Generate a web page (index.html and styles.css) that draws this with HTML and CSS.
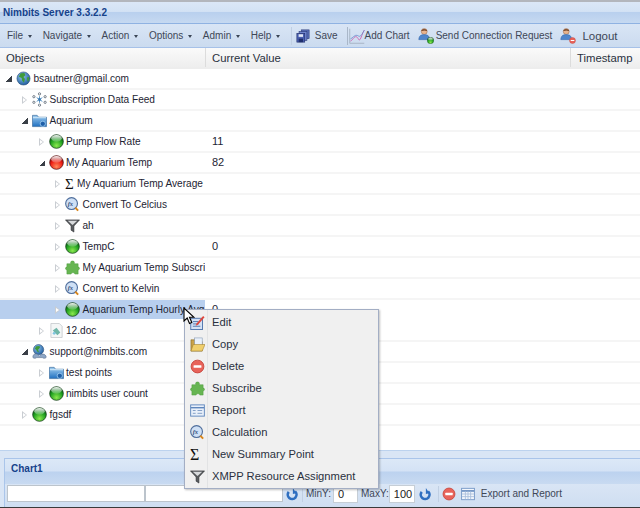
FILE: index.html
```html
<!DOCTYPE html>
<html lang="en">
<head>
<meta charset="utf-8">
<title>Nimbits Server</title>
<link rel="stylesheet" href="styles.css">
</head>
<body>
<svg class="defs" width="0" height="0" aria-hidden="true">
  <defs>
    <radialGradient id="gGreen" cx="50%" cy="80%" r="70%"><stop offset="0" stop-color="#8be84f"/><stop offset=".65" stop-color="#1fa01f"/><stop offset="1" stop-color="#0b5f14"/></radialGradient>
    <radialGradient id="gRed" cx="50%" cy="80%" r="70%"><stop offset="0" stop-color="#ff8a5c"/><stop offset=".65" stop-color="#ee1c12"/><stop offset="1" stop-color="#8f0b0b"/></radialGradient>
    <linearGradient id="gShine" x1="0" y1="0" x2="0" y2="1"><stop offset="0" stop-color="#fff" stop-opacity=".95"/><stop offset="1" stop-color="#fff" stop-opacity=".15"/></linearGradient>
    <radialGradient id="gEarth" cx="40%" cy="35%" r="70%"><stop offset="0" stop-color="#8fc4ee"/><stop offset="1" stop-color="#1d5a9c"/></radialGradient>
    <linearGradient id="gFolder" x1="0" y1="0" x2="0" y2="1"><stop offset="0" stop-color="#9fcdf0"/><stop offset="1" stop-color="#1f6fc0"/></linearGradient>
    <symbol id="i-green" viewBox="0 0 16 16"><circle cx="8" cy="8" r="7.3" fill="url(#gGreen)" stroke="#17401a" stroke-width=".8"/><ellipse cx="8" cy="4.600" rx="5.600" ry="3.600" fill="url(#gShine)"/></symbol>
    <symbol id="i-red" viewBox="0 0 16 16"><circle cx="8" cy="8" r="7.3" fill="url(#gRed)" stroke="#5a1212" stroke-width=".8"/><ellipse cx="8" cy="4.600" rx="5.600" ry="3.600" fill="url(#gShine)"/></symbol>
    <symbol id="i-globe" viewBox="0 0 16 16"><circle cx="8" cy="8" r="7" fill="url(#gEarth)" stroke="#2c4f78" stroke-width=".6"/><path d="M5 2.500 9 2l1 2.500-2 2 1.500 2-1 4-2-2.500-.5-2.500L3 6z" fill="#3f9a3a"/><path d="M11.500 7l2.500-.5v3l-1.500 2z" fill="#3f9a3a"/></symbol>
    <symbol id="i-user-globe" viewBox="0 0 16 16"><circle cx="7" cy="6" r="5.500" fill="url(#gEarth)" stroke="#2c4f78" stroke-width=".6"/><path d="M4.500 2.500 8 2l.5 2-2 2 1 3-2-1-1-2L3 5z" fill="#3f9a3a"/><path d="M1 13c1-3 3-3 5-2l2 2 2-2c2-.6 4 0 5 2v1.500c-1 1-3 1-4 0H5c-1 1-3 1-4 0z" fill="#8ea7c6" stroke="#50688a" stroke-width=".6"/></symbol>
    <symbol id="i-feed" viewBox="0 0 16 16"><g fill="none" stroke="#6a7480" stroke-width="1"><circle cx="8" cy="2" r="1.200"/><circle cx="8" cy="14" r="1.200"/><circle cx="2" cy="5" r="1.200"/><circle cx="14" cy="5" r="1.200"/><circle cx="2" cy="11" r="1.200"/><circle cx="14" cy="11" r="1.200"/></g><g stroke="#4f8fc4" stroke-width="1"><path d="M8 4.500v7M5 6l6 4M11 6l-6 4"/></g><circle cx="8" cy="8" r="1.500" fill="#3b79b0"/></symbol>
    <symbol id="i-folder" viewBox="0 0 16 16"><path d="M.5 2.500h5l1.500 2h8.500v10H.5z" fill="url(#gFolder)" stroke="#3a6a9a" stroke-width=".7"/><path d="M1 5h14" stroke="#d6ecfb" stroke-width="1"/><circle cx="11.500" cy="11.500" r="2.800" fill="#1f5fa8" stroke="#a9d4f4" stroke-width=".8"/></symbol>
    <symbol id="i-fx" viewBox="0 0 16 16"><circle cx="7" cy="7" r="6.300" fill="#cfe0f5" stroke="#4f6e9c" stroke-width="1.200"/><path d="M11 11.500l3 3" stroke="#d9861c" stroke-width="2"/><text x="2.800" y="10" class="fx-glyph">fx</text></symbol>
    <symbol id="i-filter" viewBox="0 0 16 16"><path d="M.5 2h15L9.500 8.500V15l-3-2V8.500z" fill="#5a5d60" stroke="#26282a" stroke-width=".6"/><path d="M3 3h10L8 7.500z" fill="#d9dbdd"/></symbol>
    <symbol id="i-puzzle" viewBox="0 0 16 16"><path d="M6 2.500c0-2 4-2 4 0V4h4v3.500c2 0 2 3 0 3V15h-3.500c0-2-4-2-4 0H2v-4.500c-2 0-2-3 0-3V4h4z" fill="#66b552" stroke="#4a9a3c" stroke-width=".5"/></symbol>
    <symbol id="i-doc" viewBox="0 0 16 16"><path d="M2 .5h9l3 3v12H2z" fill="#f4f6f6" stroke="#b8bec2" stroke-width=".7"/><path d="M4 8l4-3 4 5-3 3z" fill="#6fb6a8"/><circle cx="5.500" cy="11" r="1.500" fill="#7fc4e0"/></symbol>
    <symbol id="i-delete" viewBox="0 0 16 16"><circle cx="8" cy="8" r="6.800" fill="#e8635a" stroke="#c9483f" stroke-width="1"/><rect x="3.800" y="6.600" width="8.400" height="2.800" rx=".6" fill="#fff"/></symbol>
    <symbol id="i-refresh" viewBox="0 0 16 16"><path d="M4.300 5.500A5 5 0 1 0 11.500 5" fill="none" stroke="#2f6fc0" stroke-width="3"/><path d="M9 1v7l4-1z" fill="#2f6fc0"/></symbol>
    <symbol id="i-save" viewBox="0 0 16 16"><rect x="6" y="1" width="9" height="10" fill="#5a6fb8" stroke="#2b3a78" stroke-width=".7"/><rect x="3.500" y="3" width="9" height="10" fill="#6f84cc" stroke="#2b3a78" stroke-width=".7"/><rect x="1" y="5" width="9" height="10" fill="#4a5fb0" stroke="#1f2c68" stroke-width=".7"/><rect x="3" y="6" width="5" height="3" fill="#dfe6f5"/><rect x="3" y="11" width="5" height="4" fill="#20306e"/></symbol>
    <symbol id="i-chart" viewBox="0 0 22 22"><path d="M1 1v20h20" fill="none" stroke="#9aa8b8" stroke-width="1"/><path d="M2 18c3-1 5-7 8-6s3 6 5 4 3-9 6-13" fill="none" stroke="#cc5fae" stroke-width="1.200"/><path d="M2 15c3-1 6-6 9-5s4 5 10-7" fill="none" stroke="#5f86c8" stroke-width="1"/></symbol>
    <symbol id="i-user" viewBox="0 0 18 18"><circle cx="8" cy="4.500" r="3.800" fill="#e7b48e" stroke="#7a4a2a" stroke-width=".5"/><path d="M4.300 4c0-3 7.400-3 7.400 0-2-1-5-1-7.400 0z" fill="#6a3a1c"/><path d="M1 15c0-5 3-6.500 7-6.500s7 1.500 7 6.500z" fill="#4f86cc" stroke="#2a5a9c" stroke-width=".5"/></symbol>
    <symbol id="i-edit" viewBox="0 0 16 16"><rect x=".8" y="3.500" width="12.500" height="12" fill="#d4e2f6" stroke="#4f74ac" stroke-width="1"/><path d="M3 7h6M3 9.500h6M3 12h8" stroke="#4f74ac" stroke-width="1"/><path d="M7 9l7-8 1.500 1.500-7 8-2.500 1z" fill="#e0463c"/></symbol>
    <symbol id="i-open" viewBox="0 0 16 16"><path d="M1 3h5l1 2h6v10H1z" fill="#c9a24a" stroke="#7f6420" stroke-width=".6"/><rect x="5" y="1" width="8" height="8" fill="#eaf1fa" stroke="#7f93b0" stroke-width=".6"/><path d="M1 15l2.500-7H16l-3 7z" fill="#f0cf6c" stroke="#a07f2a" stroke-width=".6"/></symbol>
    <symbol id="i-report" viewBox="0 0 16 16"><rect x=".7" y="2" width="14.600" height="12" fill="#e9f0fa" stroke="#5f86bc" stroke-width="1"/><path d="M1 5h14" stroke="#5f86bc" stroke-width="1.500"/><path d="M3 8h3M3 11h3M8 8h5M8 11h5" stroke="#7f9cc4" stroke-width="1"/></symbol>
    <symbol id="i-table" viewBox="0 0 16 16"><rect x=".7" y="1.500" width="14.600" height="13" fill="#f2f6fc" stroke="#6f93c4" stroke-width="1"/><path d="M1 4.500h14" stroke="#6f93c4" stroke-width="2"/><path d="M1 8h14M1 11h14M5 5v9M8 5v9M11 5v9" stroke="#a9bfdc" stroke-width="1"/></symbol>
  </defs>
</svg>

<div class="app">
  <header class="titlebar"><span class="title">Nimbits Server 3.3.2.2</span></header>

  <nav class="toolbar">
    <span class="tb-item menu-btn">File</span>
    <span class="tb-item menu-btn">Navigate</span>
    <span class="tb-item menu-btn">Action</span>
    <span class="tb-item menu-btn">Options</span>
    <span class="tb-item menu-btn">Admin</span>
    <span class="tb-item menu-btn">Help</span>
    <span class="tb-sep"></span>
    <span class="tb-item tb-save"><svg class="ic14"><use href="#i-save"/></svg><span class="tb-label">Save</span></span>
    <span class="tb-sep tb-sep-chart"></span>
    <span class="tb-item tb-chart"><svg class="ic16"><use href="#i-chart"/></svg><span>Add Chart</span></span>
    <span class="tb-item tb-conn"><span class="usr"><svg class="ic14"><use href="#i-user"/></svg><svg class="badge"><use href="#i-green"/></svg></span><span class="tb-label">Send Connection Request</span></span>
    <span class="tb-item tb-logout"><span class="usr"><svg class="ic14"><use href="#i-user"/></svg><svg class="badge"><use href="#i-delete"/></svg></span><span class="tb-logout-label">Logout</span></span>
  </nav>

  <div class="grid-head">
    <div class="col col-name">Objects</div>
    <div class="col col-val">Current Value</div>
    <div class="col col-ts">Timestamp</div>
  </div>

  <main class="tree">
    <div class="row l0"><span class="cell-name"><i class="arrow open"></i><svg class="ic"><use href="#i-globe"/></svg><span>bsautner@gmail.com</span></span></div>
    <div class="row l1"><span class="cell-name"><i class="arrow"></i><svg class="ic"><use href="#i-feed"/></svg><span>Subscription Data Feed</span></span></div>
    <div class="row l1"><span class="cell-name"><i class="arrow open"></i><svg class="ic"><use href="#i-folder"/></svg><span>Aquarium</span></span></div>
    <div class="row l2"><span class="cell-name"><i class="arrow"></i><svg class="ic"><use href="#i-green"/></svg><span>Pump Flow Rate</span></span><span class="cell-val">11</span></div>
    <div class="row l2"><span class="cell-name"><i class="arrow open"></i><svg class="ic"><use href="#i-red"/></svg><span>My Aquarium Temp</span></span><span class="cell-val">82</span></div>
    <div class="row l3"><span class="cell-name"><i class="arrow"></i><span class="sigma">Σ</span><span>My Aquarium Temp Average</span></span></div>
    <div class="row l3"><span class="cell-name"><i class="arrow"></i><svg class="ic"><use href="#i-fx"/></svg><span>Convert To Celcius</span></span></div>
    <div class="row l3"><span class="cell-name"><i class="arrow"></i><svg class="ic"><use href="#i-filter"/></svg><span>ah</span></span></div>
    <div class="row l3"><span class="cell-name"><i class="arrow"></i><svg class="ic"><use href="#i-green"/></svg><span>TempC</span></span><span class="cell-val">0</span></div>
    <div class="row l3"><span class="cell-name"><i class="arrow"></i><svg class="ic"><use href="#i-puzzle"/></svg><span>My Aquarium Temp Subscription</span></span></div>
    <div class="row l3"><span class="cell-name"><i class="arrow"></i><svg class="ic"><use href="#i-fx"/></svg><span>Convert to Kelvin</span></span></div>
    <div class="row l3 selected"><span class="cell-name"><i class="arrow"></i><svg class="ic"><use href="#i-green"/></svg><span>Aquarium Temp Hourly Avg</span></span><span class="cell-val">0</span></div>
    <div class="row l2"><span class="cell-name"><i class="arrow"></i><svg class="ic"><use href="#i-doc"/></svg><span>12.doc</span></span></div>
    <div class="row l1"><span class="cell-name"><i class="arrow open"></i><svg class="ic"><use href="#i-user-globe"/></svg><span>support@nimbits.com</span></span></div>
    <div class="row l2"><span class="cell-name"><i class="arrow"></i><svg class="ic"><use href="#i-folder"/></svg><span>test points</span></span></div>
    <div class="row l2"><span class="cell-name"><i class="arrow"></i><svg class="ic"><use href="#i-green"/></svg><span>nimbits user count</span></span></div>
    <div class="row l1"><span class="cell-name"><i class="arrow"></i><svg class="ic"><use href="#i-green"/></svg><span>fgsdf</span></span></div>
  </main>

  <section class="chart">
    <div class="chart-inner">
      <div class="chart-head">Chart1</div>
      <div class="chart-tools">
        <span class="field f1"></span>
        <span class="field f2"></span>
        <svg class="ic14 tool-refresh"><use href="#i-refresh"/></svg>
        <span class="tb-sep"></span>
        <span class="lbl">MinY:</span><span class="num n0">0</span>
        <span class="lbl lbl-max">MaxY:</span><span class="num n1">100</span>
        <svg class="ic14 tool-refresh2"><use href="#i-refresh"/></svg>
        <span class="tb-sep"></span>
        <svg class="ic14"><use href="#i-delete"/></svg>
        <svg class="ic14"><use href="#i-table"/></svg>
        <span class="export">Export and Report</span>
      </div>
    </div>
  </section>
  <div class="footer-line"></div>
</div>

<div class="ctx">
  <div class="ctx-item"><svg class="ctx-ic"><use href="#i-edit"/></svg><span>Edit</span></div>
  <div class="ctx-item"><svg class="ctx-ic"><use href="#i-open"/></svg><span>Copy</span></div>
  <div class="ctx-item"><svg class="ctx-ic"><use href="#i-delete"/></svg><span>Delete</span></div>
  <div class="ctx-item"><svg class="ctx-ic"><use href="#i-puzzle"/></svg><span>Subscribe</span></div>
  <div class="ctx-item"><svg class="ctx-ic"><use href="#i-report"/></svg><span>Report</span></div>
  <div class="ctx-item"><svg class="ctx-ic"><use href="#i-fx"/></svg><span>Calculation</span></div>
  <div class="ctx-item"><span class="ctx-ic ctx-sigma">Σ</span><span>New Summary Point</span></div>
  <div class="ctx-item"><svg class="ctx-ic"><use href="#i-filter"/></svg><span>XMPP Resource Assignment</span></div>
</div>

<svg class="cursor" viewBox="0 0 12 18"><path d="M1 1v13l3.200-3 2.300 5.500 2.300-1-2.300-5.200H11z" fill="#fff" stroke="#000" stroke-width="1.100"/></svg>
</body>
</html>
```

FILE: styles.css
```css
* { box-sizing: border-box; }
html, body { margin: 0; height: 100%; }
body {
  width: 640px;
  height: 508px;
  overflow: hidden;
  background: #fff;
  font-family: "Liberation Sans", Arial, sans-serif;
  font-size: 11px;
  color: #1d2433;
  position: relative;
}
.defs { position: absolute; }
.fx-glyph { font: italic bold 7px "Liberation Serif", serif; fill: #33507c; }

.app { display: flex; flex-direction: column; height: 508px; }

.titlebar {
  height: 24px;
  flex: none;
  border-top: 2px solid #b3b6bc;
  border-bottom: 1px solid #8fb2e2;
  background: linear-gradient(#dbe7f6 0, #d3e2f4 45%, #b9d0ee 50%, #c6d9f1 100%);
  padding: 2px 0 0 3px;
}
.title { font-weight: bold; font-size: 10px; color: #15428b; line-height: 17px; }

.toolbar {
  height: 24px;
  flex: none;
  display: flex;
  align-items: center;
  padding-left: 7px;
  background: linear-gradient(#d9e5f5, #cbdbef);
  border-bottom: 1px solid #a6c1e8;
  color: #3e4757;
  font-size: 10px;
}
.tb-item { display: inline-flex; align-items: center; white-space: nowrap; }
.menu-btn { margin-right: 10.500px; }
.menu-btn::after {
  content: "";
  margin-left: 5px;
  margin-top: 1px;
  border-left: 2.500px solid transparent;
  border-right: 2.500px solid transparent;
  border-top: 3px solid #3a4556;
}
.tb-sep { width: 1px; height: 18px; border-left: 1px solid #c0cfe3; flex: none; }
.tb-save { margin-left: 4px; }
.tb-label { margin-left: 5px; }
.tb-sep-chart { margin-left: 9px; border-left-color: #a9b7c9; }
.tb-chart { margin-left: 1px; }
.tb-conn { margin-left: 8px; }
.tb-conn .tb-label { margin-left: 3px; }
.tb-logout { margin-left: 8px; }
.tb-logout-label { margin-left: 7px; font-size: 11.500px; }
.usr { position: relative; display: inline-flex; width: 15px; height: 16px; }
.badge { position: absolute; right: -1px; bottom: 0; width: 7px; height: 7px; }
.ic14 { width: 14px; height: 14px; flex: none; }
.ic16 { width: 16px; height: 16px; flex: none; }

.grid-head {
  height: 21px;
  flex: none;
  display: flex;
  background: linear-gradient(#fafafa, #eeeeee);
  border-bottom: 2px solid #ededed;
  font-size: 11.300px;
  color: #2a3140;
  line-height: 20px;
}
.col { padding-left: 6px; border-right: 1px solid #dcdcdc; }
.col-name { width: 206px; }
.col-val { width: 365px; }
.col-ts { flex: 1; border-right: 0; }

.tree { flex: none; height: 357px; display: flex; flex-direction: column; }
.row {
  height: 21px;
  flex: none;
  display: flex;
  align-items: center;
  border-bottom: 2px solid #f5f5f5;
  white-space: nowrap;
}
.cell-name {
  width: 205px;
  height: 100%;
  flex: none;
  overflow: hidden;
  display: flex;
  align-items: center;
  font-size: 10.100px;
}
.cell-name > span:last-child { margin-top: -1px; }
.l0 .cell-name { padding-left: 5px; }
.l1 .cell-name { padding-left: 21px; }
.l2 .cell-name { padding-left: 37.500px; }
.l3 .cell-name { padding-left: 54px; }
.selected { border-bottom-color: #fff; }
.selected .cell-name { background: #b8cfee; }
.cell-val { padding-left: 7px; font-size: 11px; margin-top: -1px; }
.arrow {
  width: 0; height: 0; flex: none;
  margin: 0 5px 0 1px;
  border-left: 5px solid #c9cdd2;
  border-top: 4px solid transparent;
  border-bottom: 4px solid transparent;
  position: relative;
}
.arrow::after {
  content: "";
  position: absolute;
  left: -4px; top: -2px;
  border-left: 3px solid #fff;
  border-top: 2px solid transparent;
  border-bottom: 2px solid transparent;
}
.arrow.open {
  border: 0;
  width: 6px; height: 6px;
  margin: 0 4px 0 1px;
  background: linear-gradient(135deg, transparent 50%, #3a3f47 50%);
}
.arrow.open::after { display: none; }
.ic { width: 15px; height: 15px; flex: none; margin-right: 2.500px; }
.sigma { font: 15px/1 "Liberation Serif", serif; width: 10px; margin: 2px 2px 0 0; flex: none; color: #111; }

.chart {
  flex: 1;
  margin-top: 24px;
  background: #d9e5f5;
  border-top: 1px solid #bcd2ee;
  padding: 7px 0 0 2px;
}
.chart-inner { border-left: 1px solid #aac5ea; margin-left: 2px; }
.chart-head {
  height: 26px;
  border-top: 1px solid #a9c4ea;
  background: linear-gradient(#dce8f7 0, #d4e2f5 48%, #bcd2ef 52%, #c8daf1 100%);
  color: #15428b;
  font-weight: bold;
  font-size: 10px;
  line-height: 20px;
  padding-left: 6px;
}
.chart-tools {
  height: 23px;
  display: flex;
  align-items: center;
  background: linear-gradient(#d9e5f5, #cfdef1);
  color: #3e4757;
  font-size: 10px;
  padding: 0 0 4px 2px;
}
.field { height: 17px; background: #fff; border: 1px solid #bcc4cc; flex: none; }
.f1 { width: 138px; }
.f2 { width: 138px; }
.tool-refresh { margin-left: 2px; }
.chart-tools .tb-sep { margin: 0 3px; height: 16px; }
.chart-tools .tb-sep:nth-of-type(n) { flex: none; }
.lbl { margin-right: 1px; }
.lbl-max { margin-right: 0; }
.num { height: 18px; background: #fff; border: 1px solid #c6ced6; padding: 2px 0 0 4px; font-size: 11px; color: #222; flex: none; }
.n0 { width: 25px; margin-right: 3px; margin-left: 1px; }
.n1 { width: 26px; }
.tool-refresh2 { margin-left: 3px; margin-right: 3px; }
.chart-tools .ic14 + .ic14 { margin-left: 5px; }
.export { margin-left: 6px; }
.footer-line { height: 2px; flex: none; background: #3a3a3a; }

.ctx {
  position: absolute;
  left: 184px;
  top: 309px;
  width: 195px;
  height: 180px;
  background: linear-gradient(to right, #f0f0f0 0 22px, #e2e3e4 22px 23px, #f0f0f0 23px);
  border: 1px solid #a3aec4;
  box-shadow: 1px 1px 2px rgba(0,0,0,.25);
  padding: 1px 0;
  font-size: 11.200px;
  color: #2a3040;
}
.ctx-item { height: 22px; display: flex; align-items: center; white-space: nowrap; }
.ctx-ic { width: 15px; height: 15px; margin: 0 7px 0 5px; flex: none; }
.ctx-sigma { font: 16px/15px "Liberation Serif", serif; color: #111; text-align: left; }

.cursor { position: absolute; left: 183px; top: 307px; width: 12px; height: 18px; }
```
